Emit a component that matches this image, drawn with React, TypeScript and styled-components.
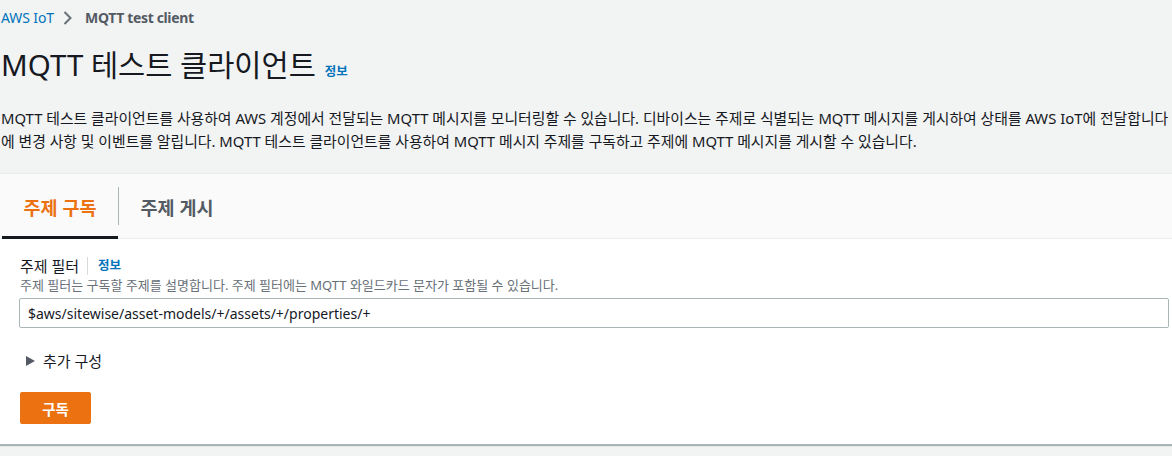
import React from "react";
import styled, { createGlobalStyle } from "styled-components";

const GlobalStyle = createGlobalStyle`
  html, body { margin: 0; padding: 0; background: #f2f3f3; overflow: hidden; }
  body { font-family: "Noto Sans", "Noto Sans CJK KR", sans-serif; color: #16191f; }
  * { box-sizing: border-box; }
`;

const Page = styled.div`
  width: 1172px;
  height: 456px;
  overflow: hidden;
  display: flex;
  flex-direction: column;
`;

const Header = styled.header`
  padding: 8px 0 0 1px;
`;

const Breadcrumbs = styled.nav`
  display: flex;
  align-items: center;
  font-size: 14px;
  line-height: 20px;
`;

const Crumb = styled.span<{ $current?: boolean }>`
  color: ${(p) => (p.$current ? "#545b64" : "#0073bb")};
  font-weight: ${(p) => (p.$current ? 700 : 400)};
  letter-spacing: ${(p) => (p.$current ? "-0.35px" : "-0.1px")};
`;

const ChevronIcon = styled.svg`
  width: 9px;
  height: 14px;
  margin: 0 13px 0 9px;
`;

const TitleRow = styled.div`
  display: flex;
  align-items: baseline;
  gap: 9px;
  margin-top: 19px;
`;

const Title = styled.h1`
  margin: 0;
  font-size: 29.5px;
  line-height: 36px;
  font-weight: 400;
  color: #16191f;
`;

const InfoLink = styled.a`
  color: #0073bb;
  font-size: 12.5px;
  font-weight: 700;
  text-decoration: none;
`;

const Description = styled.div`
  margin-top: 24px;
  font-size: 14.85px;
  line-height: 23px;
  color: #16191f;
  white-space: nowrap;
`;

const DescLine = styled.div``;

const Card = styled.section`
  margin-top: 20px;
  width: 1200px;
  background: #fff;
  border-top: 1px solid #eaeded;
  border-bottom: 1px solid #aab7b8;
  box-shadow: 0 1px 1px 0 rgba(0, 28, 36, 0.3);
`;

const TabList = styled.div`
  display: flex;
  align-items: stretch;
  height: 65px;
  background: #fafafa;
  border-bottom: 1px solid #eaeded;
  padding-left: 2px;
`;

const Tab = styled.button<{ $active?: boolean }>`
  display: flex;
  align-items: center;
  justify-content: center;
  width: 116px;
  border: none;
  background: transparent;
  font-family: inherit;
  font-size: 18.5px;
  font-weight: 700;
  color: ${(p) => (p.$active ? "#ec7211" : "#545b64")};
  border-bottom: 3px solid ${(p) => (p.$active ? "#16191f" : "transparent")};
  margin-bottom: -1px;
  padding: 3px 0 0 0;
  cursor: pointer;
`;

const TabDivider = styled.span`
  width: 1px;
  background: #aab7b8;
  margin: 13px 0;
`;

const Body = styled.div`
  padding: 17px 31px 20px 19px;
  display: flex;
  flex-direction: column;
`;

const LabelRow = styled.div`
  display: flex;
  align-items: center;
  font-size: 15px;
  line-height: 20px;
  padding-left: 1px;
`;

const Label = styled.span`
  color: #16191f;
  padding-right: 8px;
  border-right: 1px solid #d5dbdb;
  line-height: 18px;
`;

const SmallInfo = styled.a`
  color: #0073bb;
  font-size: 12.5px;
  font-weight: 700;
  margin-left: 10px;
  text-decoration: none;
`;

const Hint = styled.div`
  margin-top: 1px;
  font-size: 13px;
  line-height: 17px;
  color: #687078;
  padding-left: 1px;
`;

const Input = styled.input`
  margin-top: 4px;
  width: 100%;
  height: 30px;
  border: 1px solid #aab7b8;
  border-radius: 2px;
  padding: 0 8px;
  font-family: inherit;
  font-size: 14px;
  color: #16191f;
  background: #fff;
  outline: none;
`;

const Expander = styled.div`
  display: flex;
  align-items: center;
  gap: 8px;
  margin-top: 23px;
  padding-left: 7px;
  font-size: 15px;
  line-height: 20px;
  color: #16191f;
`;

const Caret = styled.svg`
  width: 9px;
  height: 10px;
  fill: #545b64;
`;

const Actions = styled.div`
  margin-top: 21px;
  padding-left: 1px;
`;

const PrimaryButton = styled.button`
  width: 71px;
  height: 32px;
  background: #ec7211;
  border: 1px solid #ec7211;
  border-radius: 2px;
  color: #fff;
  font-family: inherit;
  font-size: 14.5px;
  font-weight: 700;
  cursor: pointer;
`;

export default function App() {
  return (
    <>
      <GlobalStyle />
      <Page>
        <Header>
          <Breadcrumbs>
            <Crumb>AWS IoT</Crumb>
            <ChevronIcon viewBox="0 0 9 14" fill="none" stroke="#687078" strokeWidth="2">
              <polyline points="1.5,1 7.5,7 1.5,13" />
            </ChevronIcon>
            <Crumb $current>MQTT test client</Crumb>
          </Breadcrumbs>
          <TitleRow>
            <Title>MQTT 테스트 클라이언트</Title>
            <InfoLink href="#">정보</InfoLink>
          </TitleRow>
          <Description>
            <DescLine>
              MQTT 테스트 클라이언트를 사용하여 AWS 계정에서 전달되는 MQTT 메시지를 모니터링할 수 있습니다. 디바이스는 주제로 식별되는 MQTT 메시지를 게시하여 상태를 AWS IoT에 전달합니다
            </DescLine>
            <DescLine>
              에 변경 사항 및 이벤트를 알립니다. MQTT 테스트 클라이언트를 사용하여 MQTT 메시지 주제를 구독하고 주제에 MQTT 메시지를 게시할 수 있습니다.
            </DescLine>
          </Description>
        </Header>
        <Card>
          <TabList>
            <Tab $active>주제 구독</Tab>
            <TabDivider />
            <Tab>주제 게시</Tab>
          </TabList>
          <Body>
            <LabelRow>
              <Label>주제 필터</Label>
              <SmallInfo href="#">정보</SmallInfo>
            </LabelRow>
            <Hint>주제 필터는 구독할 주제를 설명합니다. 주제 필터에는 MQTT 와일드카드 문자가 포함될 수 있습니다.</Hint>
            <Input defaultValue="$aws/sitewise/asset-models/+/assets/+/properties/+" />
            <Expander>
              <Caret viewBox="0 0 9 10">
                <polygon points="0,0 9,5 0,10" />
              </Caret>
              <span>추가 구성</span>
            </Expander>
            <Actions>
              <PrimaryButton>구독</PrimaryButton>
            </Actions>
          </Body>
        </Card>
      </Page>
    </>
  );
}
